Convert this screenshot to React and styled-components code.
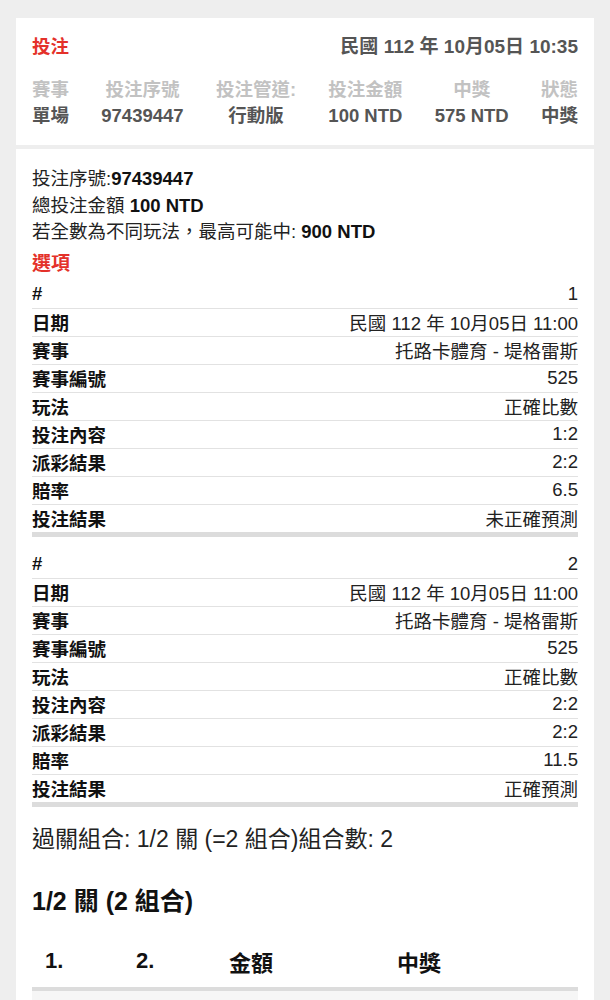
import React from 'react';
import styled, { createGlobalStyle } from 'styled-components';

const GlobalStyle = createGlobalStyle`
  body {
    margin: 0;
    background: #eeeeee;
    font-family: "Liberation Sans", "Noto Sans CJK TC", sans-serif;
    color: #222;
  }
`;

const Page = styled.div`
  padding: 18px 16px 0;
  display: flex;
  flex-direction: column;
  gap: 4px;
  height: 1000px;
  box-sizing: border-box;
  overflow: hidden;
`;

const Card = styled.div`
  background: #fff;
  padding: ${(p) => p.pad || '16px'};
  flex: ${(p) => (p.grow ? 1 : 'none')};
`;

const HeadRow = styled.div`
  display: flex;
  justify-content: space-between;
  align-items: center;
  font-size: 19px;
  line-height: 26px;
  font-weight: bold;
`;

const RedTitle = styled.div`
  color: #e4312a;
  font-weight: bold;
  font-size: ${(p) => p.size || '18.5px'};
  line-height: 26px;
  margin: ${(p) => p.margin || '0'};
`;

const DateText = styled.div`
  color: #555;
`;

const Summary = styled.div`
  display: flex;
  justify-content: space-between;
  margin-top: 17px;
`;

const SumCol = styled.div`
  display: flex;
  flex-direction: column;
  align-items: center;
  text-align: center;
  font-size: 18.5px;
  line-height: 26px;
  font-weight: bold;
  white-space: nowrap;
`;

const SumLabel = styled.div`
  color: #c2c2c2;
`;

const SumValue = styled.div`
  color: #555;
`;

const InfoLine = styled.div`
  font-size: 18.5px;
  line-height: 26.5px;
  color: #222;

  b {
    color: #111;
  }
`;

const Group = styled.div`
  margin-top: ${(p) => (p.first ? '0' : '14px')};
`;

const Row = styled.div`
  display: flex;
  justify-content: space-between;
  align-items: center;
  height: 27px;
  font-size: 18.5px;
  border-bottom: ${(p) => (p.last ? '5px solid #dcdcdc' : '1px solid #e2e2e2')};
`;

const RowLabel = styled.div`
  font-weight: bold;
  color: #111;
`;

const RowValue = styled.div`
  color: #222;
`;

const Combo = styled.div`
  font-size: 23px;
  line-height: 30px;
  color: #222;
  margin-top: 17px;
`;

const Heading = styled.div`
  font-size: 25px;
  line-height: 32px;
  font-weight: bold;
  color: #111;
  margin-top: 31px;
`;

const Table = styled.div`
  margin-top: 18px;
`;

const TableRow = styled.div`
  display: grid;
  grid-template-columns: 91px 93px 168px 1fr;
  align-items: center;
  height: ${(p) => (p.head ? '52px' : '44px')};
  background: ${(p) => (p.striped ? '#f6f6f6' : 'transparent')};
  border-bottom: ${(p) => (p.head ? '4px solid #dcdcdc' : 'none')};
  font-size: 22px;
  font-weight: bold;
  color: #111;
`;

const Cell = styled.div`
  padding-left: 13px;
`;

const summary = [
  ['賽事', '單場'],
  ['投注序號', '97439447'],
  ['投注管道:', '行動版'],
  ['投注金額', '100 NTD'],
  ['中獎', '575 NTD'],
  ['狀態', '中獎'],
];

const makeRows = (n, content, odds, result) => [
  ['#', n],
  ['日期', '民國 112 年 10月05日 11:00'],
  ['賽事', '托路卡體育 - 堤格雷斯'],
  ['賽事編號', '525'],
  ['玩法', '正確比數'],
  ['投注內容', content],
  ['派彩結果', '2:2'],
  ['賠率', odds],
  ['投注結果', result],
];

const selections = [
  makeRows('1', '1:2', '6.5', '未正確預測'),
  makeRows('2', '2:2', '11.5', '正確預測'),
];

export default function App() {
  return (
    <>
      <GlobalStyle />
      <Page>
        <Card>
          <HeadRow>
            <RedTitle>投注</RedTitle>
            <DateText>民國 112 年 10月05日 10:35</DateText>
          </HeadRow>
          <Summary>
            {summary.map(([label, value]) => (
              <SumCol key={label}>
                <SumLabel>{label}</SumLabel>
                <SumValue>{value}</SumValue>
              </SumCol>
            ))}
          </Summary>
        </Card>

        <Card grow pad="17px 16px 0">
          <InfoLine>
            投注序號:<b>97439447</b>
          </InfoLine>
          <InfoLine>
            總投注金額 <b>100 NTD</b>
          </InfoLine>
          <InfoLine>
            若全數為不同玩法，最高可能中: <b>900 NTD</b>
          </InfoLine>
          <RedTitle size="19px" margin="5px 0 4px">
            選項
          </RedTitle>

          {selections.map((rows, gi) => (
            <Group key={gi} first={gi === 0}>
              {rows.map(([label, value], i) => (
                <Row key={label} last={i === rows.length - 1}>
                  <RowLabel>{label}</RowLabel>
                  <RowValue>{value}</RowValue>
                </Row>
              ))}
            </Group>
          ))}

          <Combo>過關組合: 1/2 關 (=2 組合)組合數: 2</Combo>
          <Heading>1/2 關 (2 組合)</Heading>

          <Table>
            <TableRow head>
              <Cell>1.</Cell>
              <Cell>2.</Cell>
              <Cell>金額</Cell>
              <Cell>中獎</Cell>
            </TableRow>
            <TableRow striped>
              <Cell />
              <Cell />
              <Cell />
              <Cell />
            </TableRow>
          </Table>
        </Card>
      </Page>
    </>
  );
}
